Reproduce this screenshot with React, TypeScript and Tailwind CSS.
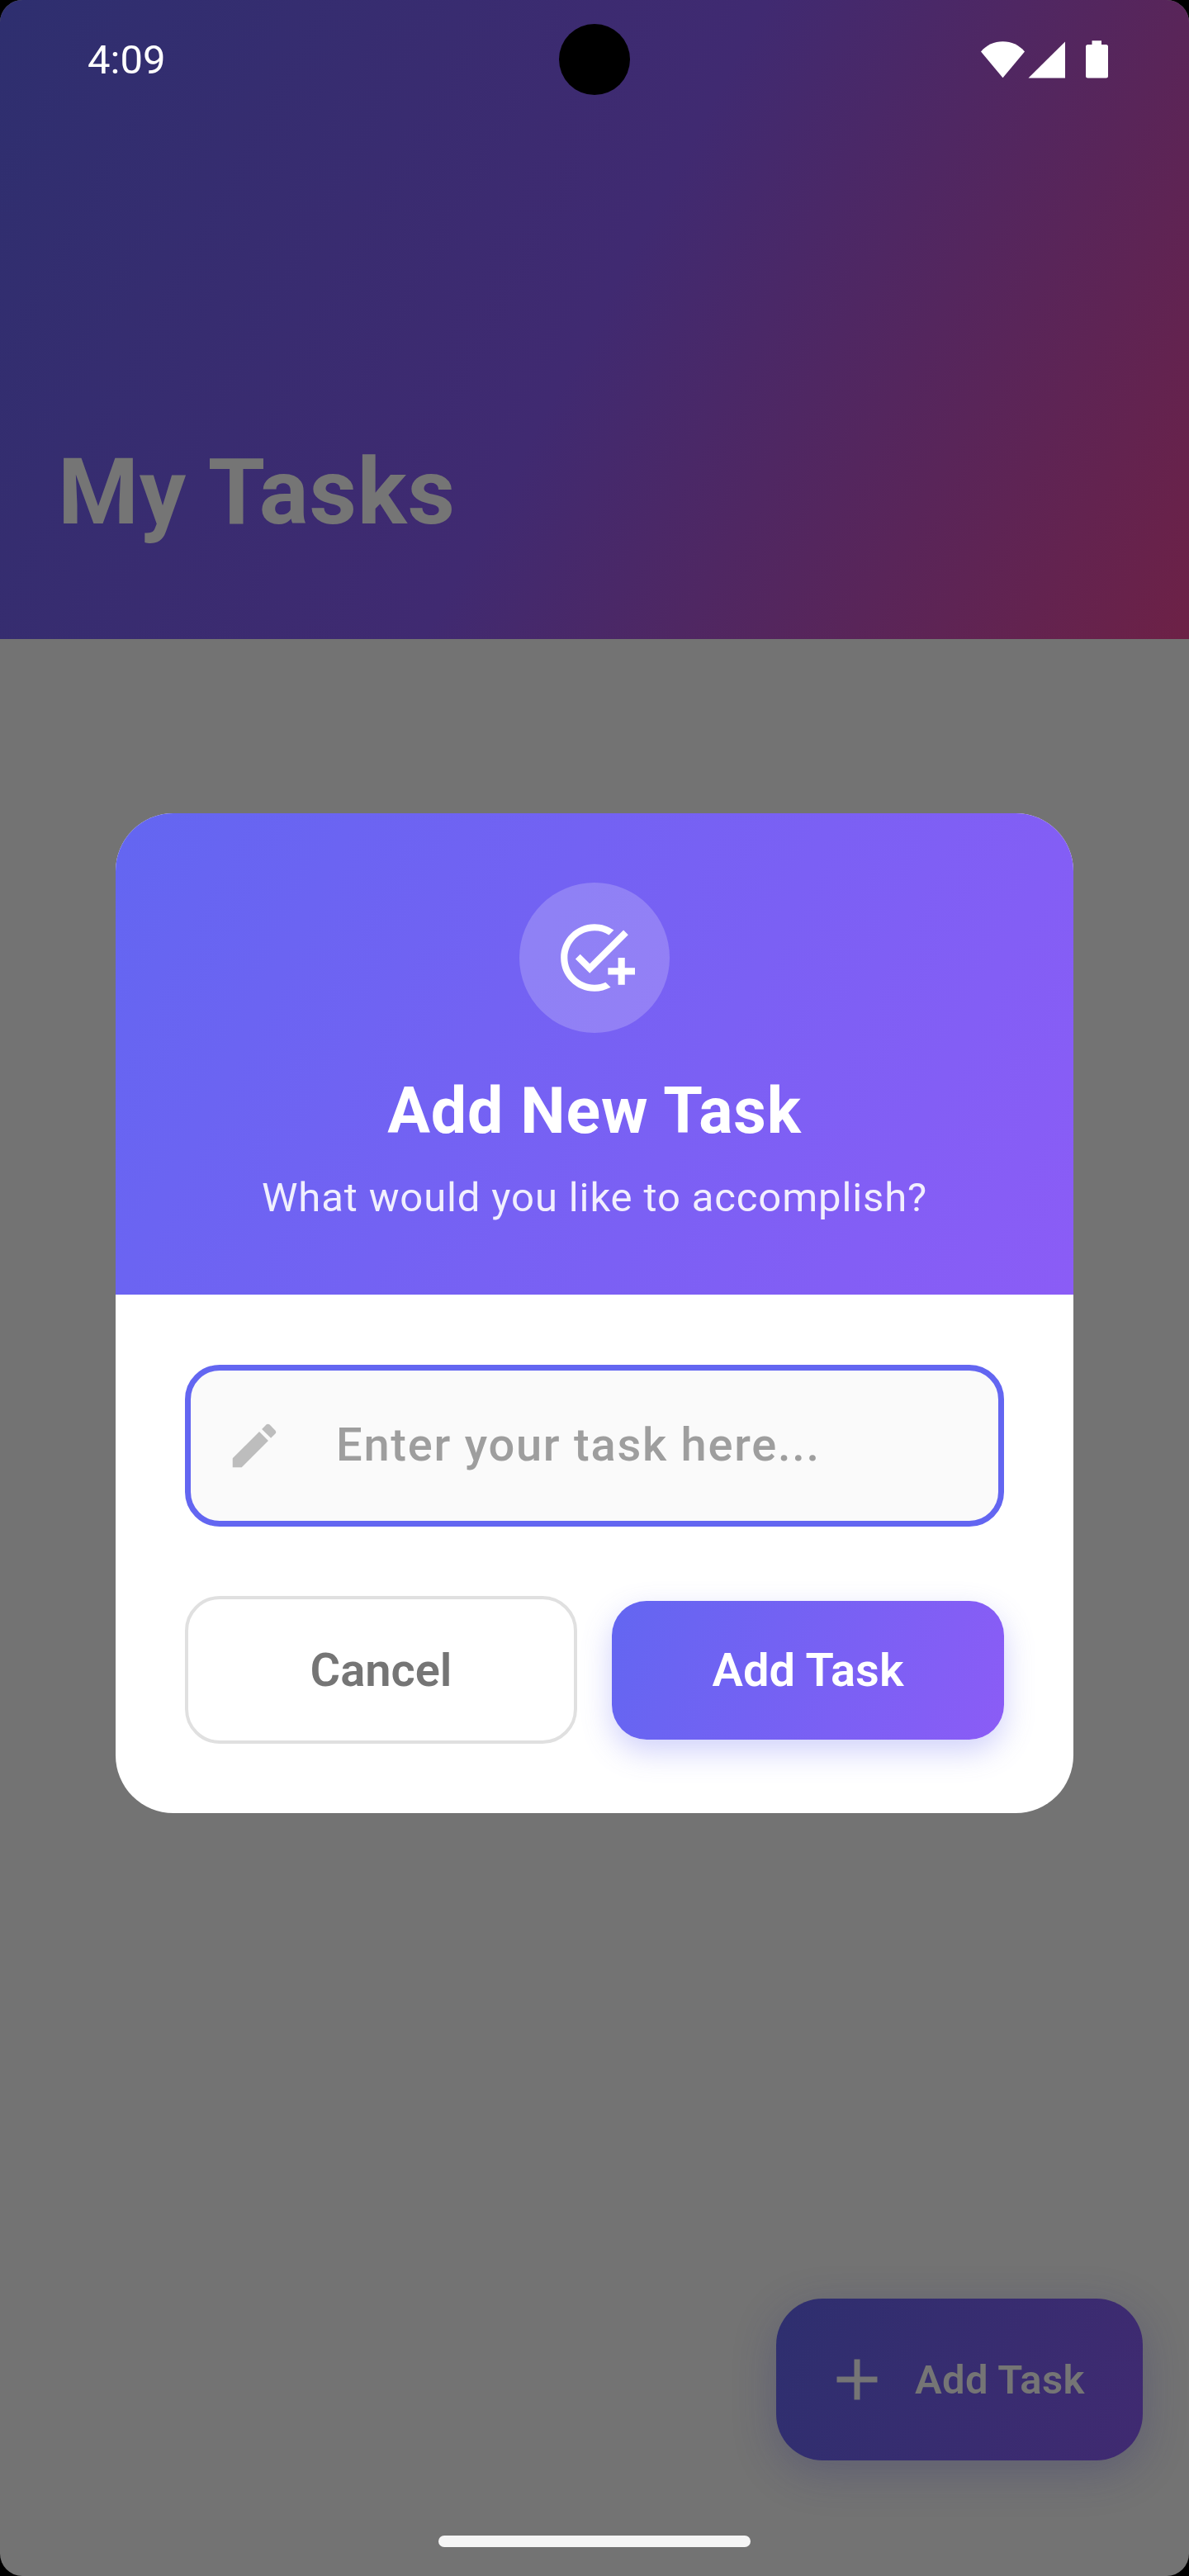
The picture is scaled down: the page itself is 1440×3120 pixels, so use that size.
import React from "react";

function StatusBar() {
  return (
    <div className="absolute inset-x-0 top-0 z-30 flex h-[144px] items-center justify-between pl-[106px] pr-[98px] text-white">
      <span className="text-[49px] leading-none">4:09</span>
      <svg className="h-[46px] w-[154px]" viewBox="0 0 154 46" fill="currentColor">
        <path d="M26.5 45.3 0 13.4C7 5.5 16 1.3 26.5 1.3S46 5.5 53 13.4Z" />
        <path d="M57.5 45.5 102 1.5v44Z" />
        <path d="M134.5 0.3h11.5v4.7h5.5a2.5 2.5 0 0 1 2.5 2.5v35.500a2.5 2.5 0 0 1-2.5 2.5h-22a2.5 2.5 0 0 1-2.500-2.500v-35.500a2.500 2.500 0 0 1 2.500-2.500h5Z" />
      </svg>
    </div>
  );
}

function AddTaskIcon() {
  return (
    <svg viewBox="0 0 24 24" className="size-[98px]" fill="currentColor">
      <path d="M22 5.18 10.59 16.6l-4.24-4.24 1.41-1.41 2.83 2.83 10-10L22 5.18zM12 20c-4.42 0-8-3.58-8-8s3.58-8 8-8c1.57 0 3.04.46 4.28 1.25l1.45-1.45C16.1 2.67 14.13 2 12 2 6.48 2 2 6.48 2 12s4.48 10 10 10c1.73 0 3.36-.44 4.78-1.22l-1.5-1.5c-1 .46-2.11.72-3.28.72zm7-5h-3v2h3v3h2v-3h3v-2h-3v-3h-2v3z" />
    </svg>
  );
}

function EditIcon() {
  return (
    <svg viewBox="0 0 24 24" className="size-[70px] text-[#bdbdbd]" fill="currentColor">
      <path d="M3 17.25V21h3.75L17.81 9.94l-3.75-3.75L3 17.25zM20.71 7.04c.39-.39.39-1.02 0-1.41l-2.34-2.34c-.39-.39-1.02-.39-1.41 0l-1.83 1.83 3.75 3.75 1.83-1.83z" />
    </svg>
  );
}

function Dialog() {
  return (
    <div className="relative z-20 mx-auto mt-[211px] h-[1211px] w-[1160px] overflow-hidden rounded-[70px] bg-white">
      <div className="flex h-[583px] flex-col items-center bg-[linear-gradient(116.68deg,#6366f1,#8b5cf6)] pt-[84px] text-white">
        <div className="flex size-[182px] items-center justify-center rounded-full bg-white/20">
          <AddTaskIcon />
        </div>
        <h2 className="mt-[50px] text-[77px] leading-[90px] font-bold tracking-[0.875px]">Add New Task</h2>
        <p className="mt-[31px] text-[49px] leading-[58px] tracking-[0.875px] text-white/90">
          What would you like to accomplish?
        </p>
      </div>
      <div className="px-[84px] pt-[85px]">
        <div className="flex h-[196px] items-center rounded-[42px] border-[7px] border-[#6366f1] bg-[#fafafa] pl-[42px]">
          <EditIcon />
          <span className="ml-[64px] pb-[2px] text-[56px] leading-[66px] font-medium tracking-[1.75px] text-[#9e9e9e]">
            Enter your task here...
          </span>
        </div>
        <div className="mt-[84px] flex items-center justify-between">
          <button className="h-[179px] w-[475px] rounded-[42px] border-4 border-[#e0e0e0] text-[56px] font-semibold text-[#757575]">
            Cancel
          </button>
          <button className="h-[168px] w-[475px] rounded-[42px] bg-[linear-gradient(109.48deg,#6366f1,#8b5cf6)] text-[56px] font-semibold text-white shadow-[0_14px_36px_rgba(99,102,241,0.3)]">
            Add Task
          </button>
        </div>
      </div>
    </div>
  );
}

export default function App() {
  return (
    <div className="h-[3120px] w-[1440px] overflow-hidden bg-black font-['Roboto',sans-serif]">
      <div className="relative h-full overflow-hidden rounded-[27px] bg-[#737373]">
        <StatusBar />
        <div className="absolute left-[677px] top-[29px] z-30 size-[86px] rounded-full bg-black" />
        <header className="flex h-[774px] items-end bg-[linear-gradient(118.26deg,#2e2f6f,#402a71_50%,#6d2146)] pb-[113px] pl-[70px]">
          <h1 className="text-[112px] leading-[131px] font-bold tracking-[0.8px] text-[#757575]">My Tasks</h1>
        </header>
        <Dialog />
        <button className="absolute bottom-[140px] right-[56px] flex h-[196px] w-[444px] items-center rounded-[56px] bg-[linear-gradient(113.82deg,#2e2f6f,#402a71)] pl-[56px] text-[#757575] shadow-[0_14px_52px_rgba(46,47,111,0.3)]">
          <svg viewBox="0 0 24 24" className="size-[84px]" fill="currentColor">
            <path d="M19 13h-6v6h-2v-6H5v-2h6V5h2v6h6v2z" />
          </svg>
          <span className="ml-[28px] pt-[2px] text-[49px] leading-[58px] font-semibold tracking-[0.35px]">Add Task</span>
        </button>
        <div className="absolute bottom-[35px] left-[531px] h-[14px] w-[378px] rounded-full bg-[#f5f5f5]" />
      </div>
    </div>
  );
}
